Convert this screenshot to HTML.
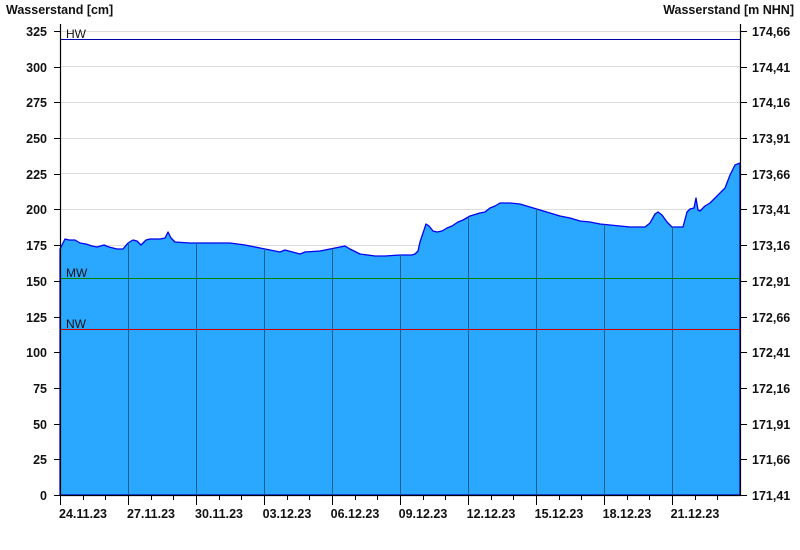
<!DOCTYPE html>
<html><head><meta charset="utf-8"><style>
body{margin:0;background:#fff;}
svg{display:block;font-family:"Liberation Sans",Arial,sans-serif;}
.b{font-weight:bold;font-size:12.5px;fill:#111;}
.n{font-size:12px;fill:#111;}
</style></head><body>
<svg width="800" height="550" viewBox="0 0 800 550">
<defs>
<clipPath id="c"><polygon id="pp" points="60,495 60,249 63,243 65,239 69,240 75,240 80,243 86,244 92,246 97,247 104,245 109,247 117,249 123,249 128,243 133,240 137,241 141,245 146,240 150,239 160,239 165,238 168,232 171,238 175,242 190,243 198,243 230,243 245,245 265,249 280,252 285,250 300,254 305,252 320,251 330,249 340,247 345,246 350,249 360,254 375,256 385,256 400,255 412,255 415,254 418,251 420,242 422,236 426,224 429,226 433,231 437,232 442,231 447,228 452,226 458,222 463,220 470,216 480,213 485,212 490,208 495,206 500,203 510,203 520,204 530,207 540,210 550,213 560,216 570,218 580,221 590,222 600,224 610,225 620,226 630,227 645,227 650,223 655,214 658,212 662,215 667,222 672,227 683,227 687,212 690,209 694,208 696,198 698,210 700,211 705,206 710,203 715,198 720,193 725,188 730,175 735,165 740,163 740,495"/></clipPath>
</defs>
<g stroke="#dcdcdc" stroke-width="1">
<line x1="60" x2="740" y1="66.5" y2="66.5"/><line x1="60" x2="740" y1="102.5" y2="102.5"/><line x1="60" x2="740" y1="138.5" y2="138.5"/><line x1="60" x2="740" y1="173.5" y2="173.5"/><line x1="60" x2="740" y1="209.5" y2="209.5"/><line x1="60" x2="740" y1="245.5" y2="245.5"/><line x1="60" x2="740" y1="31.5" y2="31.5"/>
</g>
<polygon points="60,495 60,249 63,243 65,239 69,240 75,240 80,243 86,244 92,246 97,247 104,245 109,247 117,249 123,249 128,243 133,240 137,241 141,245 146,240 150,239 160,239 165,238 168,232 171,238 175,242 190,243 198,243 230,243 245,245 265,249 280,252 285,250 300,254 305,252 320,251 330,249 340,247 345,246 350,249 360,254 375,256 385,256 400,255 412,255 415,254 418,251 420,242 422,236 426,224 429,226 433,231 437,232 442,231 447,228 452,226 458,222 463,220 470,216 480,213 485,212 490,208 495,206 500,203 510,203 520,204 530,207 540,210 550,213 560,216 570,218 580,221 590,222 600,224 610,225 620,226 630,227 645,227 650,223 655,214 658,212 662,215 667,222 672,227 683,227 687,212 690,209 694,208 696,198 698,210 700,211 705,206 710,203 715,198 720,193 725,188 730,175 735,165 740,163 740,495" fill="#2aa8ff" stroke="#0000ee" stroke-width="1.3" stroke-linejoin="round"/>
<g clip-path="url(#c)" stroke="#1f5f8c" stroke-width="1">
<line x1="128.5" x2="128.5" y1="0" y2="495"/><line x1="196.5" x2="196.5" y1="0" y2="495"/><line x1="264.5" x2="264.5" y1="0" y2="495"/><line x1="332.5" x2="332.5" y1="0" y2="495"/><line x1="400.5" x2="400.5" y1="0" y2="495"/><line x1="468.5" x2="468.5" y1="0" y2="495"/><line x1="536.5" x2="536.5" y1="0" y2="495"/><line x1="604.5" x2="604.5" y1="0" y2="495"/><line x1="672.5" x2="672.5" y1="0" y2="495"/>
</g>
<line x1="60" x2="740" y1="39.5" y2="39.5" stroke="#0000aa"/>
<line x1="60" x2="740" y1="278.5" y2="278.5" stroke="#008000"/>
<line x1="60" x2="740" y1="329.5" y2="329.5" stroke="#cc0000"/>
<text x="66" y="38" class="n">HW</text>
<text x="66" y="277" class="n">MW</text>
<text x="66" y="328" class="n">NW</text>
<g stroke="#000" stroke-width="1.2">
<line x1="60.5" x2="60.5" y1="24" y2="495"/><line x1="740.5" x2="740.5" y1="24" y2="495"/><line x1="60" x2="741" y1="495.5" y2="495.5"/>
</g>
<g stroke="#000">
<path d="M54 31.5H60M54 67.5H60M54 102.5H60M54 138.5H60M54 174.5H60M54 209.5H60M54 245.5H60M54 281.5H60M54 317.5H60M54 352.5H60M54 388.5H60M54 424.5H60M54 459.5H60M54 495.5H60"/>
<path d="M741 31.5H747M741 67.5H747M741 102.5H747M741 138.5H747M741 174.5H747M741 209.5H747M741 245.5H747M741 281.5H747M741 317.5H747M741 352.5H747M741 388.5H747M741 424.5H747M741 459.5H747M741 495.5H747"/>
<path d="M60.5 495V505M128.5 495V505M196.5 495V505M264.5 495V505M332.5 495V505M400.5 495V505M468.5 495V505M536.5 495V505M604.5 495V505M672.5 495V505"/>
<path d="M83.5 495V500M105.5 495V500M151.5 495V500M173.5 495V500M219.5 495V500M241.5 495V500M287.5 495V500M309.5 495V500M355.5 495V500M377.5 495V500M423.5 495V500M445.5 495V500M491.5 495V500M513.5 495V500M559.5 495V500M581.5 495V500M627.5 495V500M649.5 495V500M695.5 495V500M717.5 495V500"/>
</g>
<text x="6" y="14" class="b">Wasserstand [cm]</text>
<text x="794" y="14" class="b" text-anchor="end">Wasserstand [m NHN]</text>
<g class="b" text-anchor="end">
<text x="47" y="36">325</text><text x="47" y="72">300</text><text x="47" y="107">275</text><text x="47" y="143">250</text><text x="47" y="179">225</text><text x="47" y="214">200</text><text x="47" y="250">175</text><text x="47" y="286">150</text><text x="47" y="322">125</text><text x="47" y="357">100</text><text x="47" y="393">75</text><text x="47" y="429">50</text><text x="47" y="464">25</text><text x="47" y="500">0</text>
</g>
<g class="b">
<text x="752" y="36">174,66</text><text x="752" y="72">174,41</text><text x="752" y="107">174,16</text><text x="752" y="143">173,91</text><text x="752" y="179">173,66</text><text x="752" y="214">173,41</text><text x="752" y="250">173,16</text><text x="752" y="286">172,91</text><text x="752" y="322">172,66</text><text x="752" y="357">172,41</text><text x="752" y="393">172,16</text><text x="752" y="429">171,91</text><text x="752" y="464">171,66</text><text x="752" y="500">171,41</text>
</g>
<g class="b" text-anchor="middle">
<text x="83" y="518">24.11.23</text><text x="151" y="518">27.11.23</text><text x="219" y="518">30.11.23</text><text x="287" y="518">03.12.23</text><text x="355" y="518">06.12.23</text><text x="423" y="518">09.12.23</text><text x="491" y="518">12.12.23</text><text x="559" y="518">15.12.23</text><text x="627" y="518">18.12.23</text><text x="695" y="518">21.12.23</text>
</g>
</svg>
</body></html>
